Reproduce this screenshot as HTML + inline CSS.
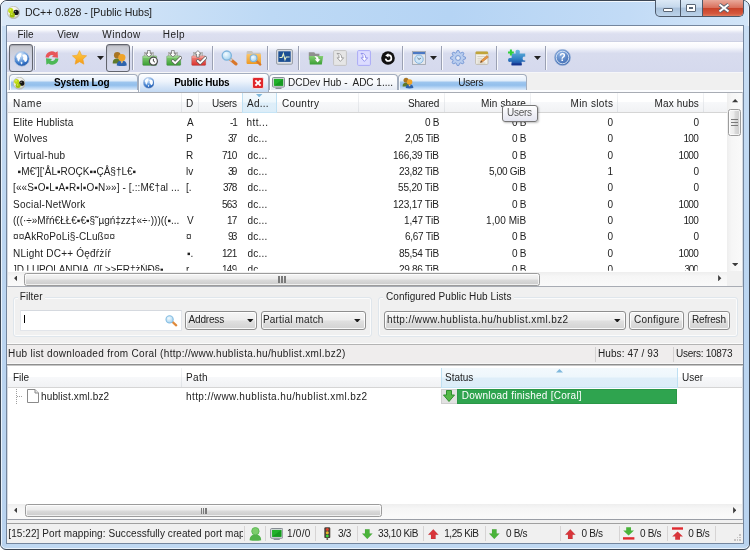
<!DOCTYPE html>
<html lang="en"><head><meta charset="utf-8"><title>DC++ 0.828 - [Public Hubs]</title>
<style>
html,body{margin:0;padding:0;background:#fff;}
body{width:750px;height:550px;overflow:hidden;font-family:"Liberation Sans","DejaVu Sans",sans-serif;font-size:10px;color:#000;}
#root{position:relative;width:750px;height:550px;overflow:hidden;will-change:transform;}
#root div,#root span.t,#root svg{position:absolute;box-sizing:border-box;}
span.t{white-space:pre;color:#222;}

</style></head><body>
<div id="root">
<svg style="left:0;top:0" width="0" height="0"><defs>
<radialGradient id="gGlobe" cx="40%" cy="22%" r="85%"><stop offset="0" stop-color="#e2eefc"/><stop offset=".35" stop-color="#8db8ea"/><stop offset=".7" stop-color="#3876c8"/><stop offset="1" stop-color="#184a9c"/></radialGradient>
<radialGradient id="gLens" cx="40%" cy="35%" r="70%"><stop offset="0" stop-color="#f4fbff"/><stop offset="1" stop-color="#9fd0ee"/></radialGradient>
<linearGradient id="gStar" x1="0" y1="0" x2="0" y2="1"><stop offset="0" stop-color="#ffd24a"/><stop offset="1" stop-color="#f59a16"/></linearGradient>
<linearGradient id="gGreen" x1="0" y1="0" x2="0" y2="1"><stop offset="0" stop-color="#86cf74"/><stop offset="1" stop-color="#3a9f34"/></linearGradient>
<linearGradient id="gRed" x1="0" y1="0" x2="0" y2="1"><stop offset="0" stop-color="#f58a80"/><stop offset="1" stop-color="#d8302c"/></linearGradient>
<linearGradient id="gOrange" x1="0" y1="0" x2="0" y2="1"><stop offset="0" stop-color="#fbc56a"/><stop offset="1" stop-color="#ee9a22"/></linearGradient>
<linearGradient id="gPuzzle" x1="0" y1="0" x2="0" y2="1"><stop offset="0" stop-color="#6cbadf"/><stop offset=".6" stop-color="#2f7fc4"/><stop offset="1" stop-color="#163f9c"/></linearGradient>
<radialGradient id="gHelp" cx="40%" cy="30%" r="80%"><stop offset="0" stop-color="#8fb4e6"/><stop offset="1" stop-color="#2c5aa6"/></radialGradient>
<radialGradient id="gLogo" cx="45%" cy="40%" r="62%"><stop offset="0" stop-color="#ffffff"/><stop offset=".6" stop-color="#f0f0ea"/><stop offset="1" stop-color="#b4b4aa"/></radialGradient>
<linearGradient id="gTabA" x1="0" y1="0" x2="0" y2="1"><stop offset="0" stop-color="#ffffff"/><stop offset=".45" stop-color="#d9e8f8"/><stop offset=".55" stop-color="#a6c9ee"/><stop offset=".8" stop-color="#a9ccf0"/><stop offset="1" stop-color="#d3e5f8"/></linearGradient>
</defs></svg>
<div style="left:0px;top:0px;width:750px;height:550px;background:#bfd8f2;border:1px solid #3c4654;border-radius:7px 7px 6px 6px;box-shadow:inset 0 0 0 1px #eaf3fc;overflow:hidden;"><div style="left:1px;top:1px;width:746px;height:24px;background:linear-gradient(90deg,#dbe9f8 0,#d2e4f7 14%,#bdd9f5 36%,#b5d4f4 60%,#c2dbf6 84%,#d2e5f8 100%);"></div><div style="left:1px;top:0;width:746px;height:1px;background:#f2f8fe;"></div><div style="left:0;top:0;width:1px;height:548px;background:#eaf3fc;"></div><div style="left:1px;top:25px;width:5px;height:520px;background:linear-gradient(180deg,#c9def4,#bcd6f1 40%,#b9d3ef);"></div><div style="left:743px;top:25px;width:5px;height:520px;background:linear-gradient(180deg,#c9def4,#bcd6f1 40%,#b9d3ef);"></div></div>
<div style="left:6px;top:25px;width:738.4px;height:518.5px;border:1px solid #74869e;background:#f0f0f0;"></div>
<div style="left:655px;top:0px;width:89px;height:17px;border:1px solid #4d596a;border-top:none;border-radius:0 0 5px 5px;background:linear-gradient(180deg,#dce9f6 0,#c5d8ec 45%,#a9c1db 50%,#bcd3ea 100%);overflow:hidden;"><div style="left:24px;top:0;width:1px;height:17px;background:#4d596a"></div><div style="left:46px;top:0;width:1px;height:17px;background:#4d596a"></div><div style="left:47px;top:0;width:41px;height:17px;background:linear-gradient(180deg,#e9a99b 0,#d9705c 45%,#c9432a 50%,#d5573d 80%,#e08a6c 100%)"></div><div style="left:7px;top:8px;width:10px;height:4px;border:1px solid #5a6676;background:#fff;border-radius:1px"></div><div style="left:30px;top:4px;width:10px;height:8px;border:1px solid #5a6676;background:#fff;border-radius:1px"></div><div style="left:33px;top:7px;width:4px;height:2px;border:1px solid #5a6676;background:#c5d6e8"></div></div>
<svg style="left:718px;top:3px" width="12" height="10" viewBox="0 0 12 10"><path d="M1.5 1.5 L10.5 8.5 M10.5 1.5 L1.5 8.5" stroke="#55606e" stroke-width="3.6" stroke-linecap="butt"/><path d="M1.5 1.5 L10.5 8.5 M10.5 1.5 L1.5 8.5" stroke="#fff" stroke-width="2"/></svg>
<span class="t" style="top:6.27px;font-size:10.6px;line-height:12.72px;letter-spacing:-0.072px;left:24.90px;">DC++ 0.828 - [Public Hubs]</span>
<div style="left:7px;top:26px;width:736px;height:15.5px;background:linear-gradient(180deg,#ffffff 0,#f8f9fd 25%,#e6e8f4 38%,#dcdff0 50%,#dadded 100%);"></div>
<div style="left:7px;top:41.3px;width:736px;height:0.9px;background:#cdd1e3;"></div>
<span class="t" style="top:28.84px;font-size:10px;line-height:12.0px;left:17.40px;">File</span>
<span class="t" style="top:28.84px;font-size:10px;line-height:12.0px;left:57.30px;">View</span>
<span class="t" style="top:28.84px;font-size:10px;line-height:12.0px;letter-spacing:0.48px;left:102.30px;">Window</span>
<span class="t" style="top:28.84px;font-size:10px;line-height:12.0px;letter-spacing:0.467px;left:162.70px;">Help</span>
<div style="left:7px;top:42.2px;width:736px;height:30px;background:linear-gradient(180deg,#ffffff 0,#f7f8fc 18%,#e6e9f5 28%,#d8dcee 38%,#d5d9ed 100%);"></div>
<div style="left:7px;top:72px;width:736px;height:1px;background:#f6f6f8;"></div>
<div style="left:9px;top:44px;width:24px;height:28px;border:1px solid #62656e;border-radius:3px;background:linear-gradient(180deg,#c6c7cd 0,#cdd0dc 30%,#d3d7e9 60%,#d6daec 100%);box-shadow:inset 0 1px 1px rgba(60,60,70,.25);"></div>
<div style="left:106px;top:44px;width:24px;height:28px;border:1px solid #62656e;border-radius:3px;background:linear-gradient(180deg,#c6c7cd 0,#cdd0dc 30%,#d3d7e9 60%,#d6daec 100%);box-shadow:inset 0 1px 1px rgba(60,60,70,.25);"></div>
<div style="left:34px;top:46px;width:1px;height:24px;background:#9ba1b3;"></div>
<div style="left:35px;top:46px;width:1px;height:24px;background:#f8f9fd;"></div>
<div style="left:132px;top:46px;width:1px;height:24px;background:#9ba1b3;"></div>
<div style="left:133px;top:46px;width:1px;height:24px;background:#f8f9fd;"></div>
<div style="left:212px;top:46px;width:1px;height:24px;background:#9ba1b3;"></div>
<div style="left:213px;top:46px;width:1px;height:24px;background:#f8f9fd;"></div>
<div style="left:267px;top:46px;width:1px;height:24px;background:#9ba1b3;"></div>
<div style="left:268px;top:46px;width:1px;height:24px;background:#f8f9fd;"></div>
<div style="left:298px;top:46px;width:1px;height:24px;background:#9ba1b3;"></div>
<div style="left:299px;top:46px;width:1px;height:24px;background:#f8f9fd;"></div>
<div style="left:402px;top:46px;width:1px;height:24px;background:#9ba1b3;"></div>
<div style="left:403px;top:46px;width:1px;height:24px;background:#f8f9fd;"></div>
<div style="left:441px;top:46px;width:1px;height:24px;background:#9ba1b3;"></div>
<div style="left:442px;top:46px;width:1px;height:24px;background:#f8f9fd;"></div>
<div style="left:496px;top:46px;width:1px;height:24px;background:#9ba1b3;"></div>
<div style="left:497px;top:46px;width:1px;height:24px;background:#f8f9fd;"></div>
<div style="left:545px;top:46px;width:1px;height:24px;background:#9ba1b3;"></div>
<div style="left:546px;top:46px;width:1px;height:24px;background:#f8f9fd;"></div>
<div style="left:7px;top:73px;width:736px;height:19px;background:#f0f0f0;"></div>
<div style="left:7px;top:91.5px;width:736px;height:195.5px;background:#fff;border:1px solid #a8acb4;border-left-color:#d4d9e0;border-right-color:#d4d9e0;"></div>
<div style="left:8px;top:93px;width:719px;height:20px;background:linear-gradient(180deg,#ffffff 0,#ffffff 45%,#f7f8fa 50%,#f1f2f4 100%);border-bottom:1px solid #d5d5d5;"></div>
<div style="left:7px;top:366px;width:736px;height:154px;background:#fff;border:1px solid #9a9ea6;border-top-color:#fff;border-left-color:#d4d9e0;border-right-color:#d4d9e0;"></div>
<div style="left:7px;top:523px;width:736px;height:20px;background:#f0f0f0;border-top:1px solid #a0a0a0;"></div>
<div style="left:181px;top:93px;width:1px;height:19px;background:linear-gradient(180deg,#f2f3f5,#dfe2e6);"></div>
<div style="left:198px;top:93px;width:1px;height:19px;background:linear-gradient(180deg,#f2f3f5,#dfe2e6);"></div>
<div style="left:242px;top:93px;width:1px;height:19px;background:linear-gradient(180deg,#f2f3f5,#dfe2e6);"></div>
<div style="left:276px;top:93px;width:1px;height:19px;background:linear-gradient(180deg,#f2f3f5,#dfe2e6);"></div>
<div style="left:358px;top:93px;width:1px;height:19px;background:linear-gradient(180deg,#f2f3f5,#dfe2e6);"></div>
<div style="left:444px;top:93px;width:1px;height:19px;background:linear-gradient(180deg,#f2f3f5,#dfe2e6);"></div>
<div style="left:530px;top:93px;width:1px;height:19px;background:linear-gradient(180deg,#f2f3f5,#dfe2e6);"></div>
<div style="left:617px;top:93px;width:1px;height:19px;background:linear-gradient(180deg,#f2f3f5,#dfe2e6);"></div>
<div style="left:703px;top:93px;width:1px;height:19px;background:linear-gradient(180deg,#f2f3f5,#dfe2e6);"></div>
<div style="left:242px;top:93px;width:35px;height:20px;background:linear-gradient(180deg,#f3f9fd 0,#eef7fc 45%,#deeef9 55%,#dcedf8 100%);border-left:1px solid #bfe0f3;border-right:1px solid #bfe0f3;border-bottom:1px solid #c6e4f5;"></div>
<svg style="left:256.4px;top:94px" width="6.4" height="3.4" viewBox="0 0 8 4"><path d="M0 0 H8 L4 4 Z" fill="#7fb8dc"/></svg>
<span class="t" style="top:97.83px;font-size:10px;line-height:12.0px;letter-spacing:0.667px;left:13.00px;">Name</span>
<span class="t" style="top:97.83px;font-size:10px;line-height:12.0px;left:186.00px;">D</span>
<span class="t" style="top:97.83px;font-size:10px;line-height:12.0px;letter-spacing:-0.25px;left:212.00px;">Users</span>
<span class="t" style="top:97.83px;font-size:10px;line-height:12.0px;letter-spacing:0.25px;left:247.00px;">Ad...</span>
<span class="t" style="top:97.83px;font-size:10px;line-height:12.0px;letter-spacing:0.333px;left:282.00px;">Country</span>
<span class="t" style="top:97.83px;font-size:10px;line-height:12.0px;letter-spacing:-0.2px;left:408.00px;">Shared</span>
<span class="t" style="top:97.83px;font-size:10px;line-height:12.0px;letter-spacing:0.125px;left:481.00px;">Min share</span>
<span class="t" style="top:97.83px;font-size:10px;line-height:12.0px;letter-spacing:0.375px;left:570.50px;">Min slots</span>
<span class="t" style="top:97.83px;font-size:10px;line-height:12.0px;letter-spacing:0.143px;left:654.50px;">Max hubs</span>
<span class="t" style="top:116.83px;font-size:10px;line-height:12.0px;letter-spacing:0.154px;left:13.00px;">Elite Hublista</span>
<span class="t" style="top:116.83px;font-size:10px;line-height:12.0px;left:187.00px;">A</span>
<span class="t" style="top:116.83px;font-size:10px;line-height:12.0px;letter-spacing:-1.0px;left:230.00px;">-1</span>
<span class="t" style="top:116.83px;font-size:10px;line-height:12.0px;letter-spacing:0.4px;left:246.50px;">htt...</span>
<span class="t" style="top:116.83px;font-size:10px;line-height:12.0px;letter-spacing:-0.3px;left:425.00px;">0 B</span>
<span class="t" style="top:116.83px;font-size:10px;line-height:12.0px;letter-spacing:-0.3px;left:512.00px;">0 B</span>
<span class="t" style="top:116.83px;font-size:10px;line-height:12.0px;left:607.50px;">0</span>
<span class="t" style="top:116.83px;font-size:10px;line-height:12.0px;left:693.50px;">0</span>
<span class="t" style="top:132.84px;font-size:10px;line-height:12.0px;letter-spacing:0.2px;left:14.00px;">Wolves</span>
<span class="t" style="top:132.84px;font-size:10px;line-height:12.0px;left:186.00px;">P</span>
<span class="t" style="top:132.84px;font-size:10px;line-height:12.0px;letter-spacing:-1.8px;left:228.00px;">37</span>
<span class="t" style="top:132.84px;font-size:10px;line-height:12.0px;letter-spacing:0.25px;left:247.50px;">dc...</span>
<span class="t" style="top:132.84px;font-size:10px;line-height:12.0px;letter-spacing:-0.286px;left:405.00px;">2,05 TiB</span>
<span class="t" style="top:132.84px;font-size:10px;line-height:12.0px;letter-spacing:-0.3px;left:512.00px;">0 B</span>
<span class="t" style="top:132.84px;font-size:10px;line-height:12.0px;left:607.50px;">0</span>
<span class="t" style="top:132.84px;font-size:10px;line-height:12.0px;letter-spacing:-0.7px;left:683.50px;">100</span>
<span class="t" style="top:149.84px;font-size:10px;line-height:12.0px;letter-spacing:0.3px;left:14.00px;">Virtual-hub</span>
<span class="t" style="top:149.84px;font-size:10px;line-height:12.0px;left:186.00px;">R</span>
<span class="t" style="top:149.84px;font-size:10px;line-height:12.0px;letter-spacing:-0.7px;left:222.00px;">710</span>
<span class="t" style="top:149.84px;font-size:10px;line-height:12.0px;letter-spacing:0.25px;left:247.50px;">dc...</span>
<span class="t" style="top:149.84px;font-size:10px;line-height:12.0px;letter-spacing:-0.2px;left:393.00px;">166,39 TiB</span>
<span class="t" style="top:149.84px;font-size:10px;line-height:12.0px;letter-spacing:-0.3px;left:512.00px;">0 B</span>
<span class="t" style="top:149.84px;font-size:10px;line-height:12.0px;left:607.50px;">0</span>
<span class="t" style="top:149.84px;font-size:10px;line-height:12.0px;letter-spacing:-0.667px;left:678.50px;">1000</span>
<span class="t" style="top:165.84px;font-size:10px;line-height:12.0px;left:17.60px;">▪M€&#x27;][‘ÅL▪ROÇK▪▪ÇÅ§†L€▪</span>
<span class="t" style="top:165.84px;font-size:10px;line-height:12.0px;left:186.00px;">lv</span>
<span class="t" style="top:165.84px;font-size:10px;line-height:12.0px;letter-spacing:-1.8px;left:228.00px;">39</span>
<span class="t" style="top:165.84px;font-size:10px;line-height:12.0px;letter-spacing:0.25px;left:247.50px;">dc...</span>
<span class="t" style="top:165.84px;font-size:10px;line-height:12.0px;letter-spacing:-0.275px;left:399.00px;">23,82 TiB</span>
<span class="t" style="top:165.84px;font-size:10px;line-height:12.0px;letter-spacing:-0.286px;left:489.00px;">5,00 GiB</span>
<span class="t" style="top:165.84px;font-size:10px;line-height:12.0px;left:607.50px;">1</span>
<span class="t" style="top:165.84px;font-size:10px;line-height:12.0px;left:693.50px;">0</span>
<span class="t" style="top:181.84px;font-size:10px;line-height:12.0px;letter-spacing:0.111px;left:13.00px;">[««S▪O▪L▪A▪R▪I▪O▪N»»] - [.::M€†al ...</span>
<span class="t" style="top:181.84px;font-size:10px;line-height:12.0px;left:186.00px;">[.</span>
<span class="t" style="top:181.84px;font-size:10px;line-height:12.0px;letter-spacing:-1.2px;left:223.00px;">378</span>
<span class="t" style="top:181.84px;font-size:10px;line-height:12.0px;letter-spacing:0.25px;left:247.50px;">dc...</span>
<span class="t" style="top:181.84px;font-size:10px;line-height:12.0px;letter-spacing:-0.15px;left:398.00px;">55,20 TiB</span>
<span class="t" style="top:181.84px;font-size:10px;line-height:12.0px;letter-spacing:-0.3px;left:512.00px;">0 B</span>
<span class="t" style="top:181.84px;font-size:10px;line-height:12.0px;left:607.50px;">0</span>
<span class="t" style="top:181.84px;font-size:10px;line-height:12.0px;left:693.50px;">0</span>
<span class="t" style="top:198.84px;font-size:10px;line-height:12.0px;letter-spacing:0.231px;left:13.00px;">Social-NetWork</span>
<span class="t" style="top:198.84px;font-size:10px;line-height:12.0px;letter-spacing:-0.7px;left:222.00px;">563</span>
<span class="t" style="top:198.84px;font-size:10px;line-height:12.0px;letter-spacing:0.25px;left:247.50px;">dc...</span>
<span class="t" style="top:198.84px;font-size:10px;line-height:12.0px;letter-spacing:-0.2px;left:393.00px;">123,17 TiB</span>
<span class="t" style="top:198.84px;font-size:10px;line-height:12.0px;letter-spacing:-0.3px;left:512.00px;">0 B</span>
<span class="t" style="top:198.84px;font-size:10px;line-height:12.0px;left:607.50px;">0</span>
<span class="t" style="top:198.84px;font-size:10px;line-height:12.0px;letter-spacing:-0.667px;left:678.50px;">1000</span>
<span class="t" style="top:214.84px;font-size:10px;line-height:12.0px;left:13.00px;">(((·÷»Mřń€ŁŁ€▪€▪§˜µgń‡zz‡«÷·)))((▪...</span>
<span class="t" style="top:214.84px;font-size:10px;line-height:12.0px;left:187.00px;">V</span>
<span class="t" style="top:214.84px;font-size:10px;line-height:12.0px;letter-spacing:-0.8px;left:227.00px;">17</span>
<span class="t" style="top:214.84px;font-size:10px;line-height:12.0px;letter-spacing:0.25px;left:247.50px;">dc...</span>
<span class="t" style="top:214.84px;font-size:10px;line-height:12.0px;letter-spacing:-0.143px;left:404.00px;">1,47 TiB</span>
<span class="t" style="top:214.84px;font-size:10px;line-height:12.0px;letter-spacing:0.086px;left:486.00px;">1,00 MiB</span>
<span class="t" style="top:214.84px;font-size:10px;line-height:12.0px;left:607.50px;">0</span>
<span class="t" style="top:214.84px;font-size:10px;line-height:12.0px;letter-spacing:-0.7px;left:683.50px;">100</span>
<span class="t" style="top:230.84px;font-size:10px;line-height:12.0px;letter-spacing:0.118px;left:13.00px;">¤¤AkRoPoLi§-CLuß¤¤</span>
<span class="t" style="top:230.84px;font-size:10px;line-height:12.0px;left:186.00px;">¤</span>
<span class="t" style="top:230.84px;font-size:10px;line-height:12.0px;letter-spacing:-1.8px;left:228.00px;">93</span>
<span class="t" style="top:230.84px;font-size:10px;line-height:12.0px;letter-spacing:0.25px;left:247.50px;">dc...</span>
<span class="t" style="top:230.84px;font-size:10px;line-height:12.0px;letter-spacing:-0.286px;left:405.00px;">6,67 TiB</span>
<span class="t" style="top:230.84px;font-size:10px;line-height:12.0px;letter-spacing:-0.3px;left:512.00px;">0 B</span>
<span class="t" style="top:230.84px;font-size:10px;line-height:12.0px;left:607.50px;">0</span>
<span class="t" style="top:230.84px;font-size:10px;line-height:12.0px;left:693.50px;">0</span>
<span class="t" style="top:247.84px;font-size:10px;line-height:12.0px;letter-spacing:0.222px;left:13.00px;">NLight DC++ Óęđŕżíŕ</span>
<span class="t" style="top:247.84px;font-size:10px;line-height:12.0px;left:187.00px;">▪.</span>
<span class="t" style="top:247.84px;font-size:10px;line-height:12.0px;letter-spacing:-0.7px;left:222.00px;">121</span>
<span class="t" style="top:247.84px;font-size:10px;line-height:12.0px;letter-spacing:0.25px;left:247.50px;">dc...</span>
<span class="t" style="top:247.84px;font-size:10px;line-height:12.0px;letter-spacing:-0.275px;left:399.00px;">85,54 TiB</span>
<span class="t" style="top:247.84px;font-size:10px;line-height:12.0px;letter-spacing:-0.3px;left:512.00px;">0 B</span>
<span class="t" style="top:247.84px;font-size:10px;line-height:12.0px;left:607.50px;">0</span>
<span class="t" style="top:247.84px;font-size:10px;line-height:12.0px;letter-spacing:-0.667px;left:678.50px;">1000</span>
<span class="t" style="top:263.84px;font-size:10px;line-height:12.0px;letter-spacing:-0.107px;left:14.00px;clip-path:inset(0 0 5.2px 0);">]D LUPOLANDIA  (][ &gt;&gt;ER‡żŃĐ§▪</span>
<span class="t" style="top:263.84px;font-size:10px;line-height:12.0px;left:186.00px;clip-path:inset(0 0 5.2px 0);">r</span>
<span class="t" style="top:263.84px;font-size:10px;line-height:12.0px;letter-spacing:-0.7px;left:222.00px;clip-path:inset(0 0 5.2px 0);">149</span>
<span class="t" style="top:263.84px;font-size:10px;line-height:12.0px;letter-spacing:0.25px;left:247.50px;clip-path:inset(0 0 5.2px 0);">dc...</span>
<span class="t" style="top:263.84px;font-size:10px;line-height:12.0px;letter-spacing:-0.275px;left:399.00px;clip-path:inset(0 0 5.2px 0);">29,86 TiB</span>
<span class="t" style="top:263.84px;font-size:10px;line-height:12.0px;letter-spacing:-0.3px;left:512.00px;clip-path:inset(0 0 5.2px 0);">0 B</span>
<span class="t" style="top:263.84px;font-size:10px;line-height:12.0px;left:607.50px;clip-path:inset(0 0 5.2px 0);">0</span>
<span class="t" style="top:263.84px;font-size:10px;line-height:12.0px;letter-spacing:-1.2px;left:684.50px;clip-path:inset(0 0 5.2px 0);">300</span>
<div style="left:727px;top:93px;width:15px;height:179px;background:linear-gradient(90deg,#eeeeee,#f6f6f6 30%,#fafafa);"></div>
<svg style="left:731.5px;top:99.3px" width="6.4" height="3.4" viewBox="0 0 8 4"><path d="M0 4 L4 0 L8 4 Z" fill="#3c3c3c"/></svg>
<svg style="left:731.5px;top:263px" width="6.4" height="3.4" viewBox="0 0 8 4"><path d="M0 0 L4 4 L8 0 Z" fill="#3c3c3c"/></svg>
<div style="left:727.5px;top:109px;width:13px;height:26.5px;border:1px solid #9c9c9c;border-radius:2.5px;background:linear-gradient(90deg,#f5f5f5 0,#ebebeb 45%,#dadada 55%,#cbcbcb 100%);box-shadow:inset 0 0 0 1px rgba(255,255,255,.7);"></div>
<div style="left:731px;top:118.5px;width:6.5px;height:1.5px;background:#7a7a7a;"></div>
<div style="left:731px;top:121.5px;width:6.5px;height:1.5px;background:#7a7a7a;"></div>
<div style="left:731px;top:124.5px;width:6.5px;height:1.5px;background:#7a7a7a;"></div>
<div style="left:8px;top:271.5px;width:734px;height:14.5px;background:linear-gradient(180deg,#eeeeee,#f6f6f6 30%,#fafafa);"></div>
<div style="left:727px;top:271px;width:15px;height:15px;background:#f0f0f0;"></div>
<svg style="left:14px;top:275px" width="3.4" height="6.4" viewBox="0 0 4 8"><path d="M4 0 L0 4 L4 8 Z" fill="#3c3c3c"/></svg>
<svg style="left:718.2px;top:275px" width="3.4" height="6.4" viewBox="0 0 4 8"><path d="M0 0 L4 4 L0 8 Z" fill="#3c3c3c"/></svg>
<div style="left:24px;top:272.5px;width:516px;height:13px;border:1px solid #9c9c9c;border-radius:2.5px;background:linear-gradient(180deg,#f5f5f5 0,#ebebeb 45%,#dadada 55%,#cbcbcb 100%);box-shadow:inset 0 0 0 1px rgba(255,255,255,.7);"></div>
<div style="left:278px;top:276px;width:1.5px;height:6.5px;background:#7a7a7a;"></div>
<div style="left:281px;top:276px;width:1.5px;height:6.5px;background:#7a7a7a;"></div>
<div style="left:284px;top:276px;width:1.5px;height:6.5px;background:#7a7a7a;"></div>
<div style="left:502px;top:105px;width:36px;height:17px;border:1px solid #767676;border-radius:3px;background:linear-gradient(180deg,#ffffff,#e4e5f0);box-shadow:1px 1px 2px rgba(0,0,0,.25);"></div>
<span class="t" style="top:106.83px;font-size:10px;line-height:12.0px;letter-spacing:-0.25px;left:507.00px;color:#575757;">Users</span>
<div style="left:13px;top:297px;width:359px;height:39.5px;border:1px solid #dfe6ec;border-radius:3px;box-shadow:inset 0 0 0 1px rgba(255,255,255,.75);"></div>
<div style="left:18px;top:292px;width:27px;height:12px;background:#f0f0f0;"></div>
<span class="t" style="top:290.84px;font-size:10px;line-height:12.0px;letter-spacing:0.12px;left:19.70px;">Filter</span>
<div style="left:19.5px;top:309.5px;width:162.5px;height:21.5px;background:#fff;border:1px solid #e2e5ea;border-top-color:#d5d9df;border-radius:1px;"></div>
<div style="left:24px;top:315px;width:1px;height:8px;background:#000;"></div>
<svg style="left:165px;top:314.5px" width="13" height="12" viewBox="0 0 13 12"><path d="M6.5 6 L11.2 10.3" stroke="#e08a3a" stroke-width="2.3" stroke-linecap="round"/><circle cx="4.6" cy="4.4" r="3.6" fill="url(#gLens)" stroke="#86bde2" stroke-width="1.1"/></svg>
<div style="left:185.3px;top:310.5px;width:72.2px;height:19.3px;border:1px solid #8e8e8e;border-radius:3px;background:linear-gradient(180deg,#f6f6f6 0,#ededed 48%,#e0e0e0 52%,#d2d2d2 100%);box-shadow:inset 0 0 0 1px rgba(255,255,255,.85);"></div>
<svg style="left:247px;top:318.7px" width="6.6" height="3.6" viewBox="0 0 7 4"><path d="M0 0 H7 L3.5 4 Z" fill="#1a1a1a"/></svg>
<div style="left:260.6px;top:310.5px;width:105px;height:19.3px;border:1px solid #8e8e8e;border-radius:3px;background:linear-gradient(180deg,#f6f6f6 0,#ededed 48%,#e0e0e0 52%,#d2d2d2 100%);box-shadow:inset 0 0 0 1px rgba(255,255,255,.85);"></div>
<svg style="left:354px;top:318.7px" width="6.6" height="3.6" viewBox="0 0 7 4"><path d="M0 0 H7 L3.5 4 Z" fill="#1a1a1a"/></svg>
<span class="t" style="top:313.84px;font-size:10px;line-height:12.0px;letter-spacing:-0.167px;left:188.50px;">Address</span>
<span class="t" style="top:313.84px;font-size:10px;line-height:12.0px;letter-spacing:0.167px;left:263.00px;">Partial match</span>
<div style="left:378px;top:297px;width:360px;height:39.5px;border:1px solid #dfe6ec;border-radius:3px;box-shadow:inset 0 0 0 1px rgba(255,255,255,.75);"></div>
<div style="left:383px;top:292px;width:131px;height:12px;background:#f0f0f0;"></div>
<span class="t" style="top:290.84px;font-size:10px;line-height:12.0px;letter-spacing:0.077px;left:386.00px;">Configured Public Hub Lists</span>
<div style="left:384px;top:310.5px;width:242px;height:19.3px;border:1px solid #8e8e8e;border-radius:3px;background:linear-gradient(180deg,#f6f6f6 0,#ededed 48%,#e0e0e0 52%,#d2d2d2 100%);box-shadow:inset 0 0 0 1px rgba(255,255,255,.85);"></div>
<svg style="left:614px;top:318.7px" width="6.6" height="3.6" viewBox="0 0 7 4"><path d="M0 0 H7 L3.5 4 Z" fill="#1a1a1a"/></svg>
<span class="t" style="top:313.84px;font-size:10px;line-height:12.0px;letter-spacing:0.405px;left:387.00px;">http://www.hublista.hu/hublist.xml.bz2</span>
<div style="left:629.3px;top:310.5px;width:54.5px;height:19.3px;border:1px solid #8e8e8e;border-radius:3px;background:linear-gradient(180deg,#f6f6f6 0,#ededed 48%,#e0e0e0 52%,#d2d2d2 100%);box-shadow:inset 0 0 0 1px rgba(255,255,255,.85);"></div>
<span class="t" style="top:313.84px;font-size:10px;line-height:12.0px;letter-spacing:0.25px;left:634.00px;">Configure</span>
<div style="left:688.3px;top:310.5px;width:42px;height:19.3px;border:1px solid #8e8e8e;border-radius:3px;background:linear-gradient(180deg,#f6f6f6 0,#ededed 48%,#e0e0e0 52%,#d2d2d2 100%);box-shadow:inset 0 0 0 1px rgba(255,255,255,.85);"></div>
<span class="t" style="top:313.84px;font-size:10px;line-height:12.0px;letter-spacing:-0.167px;left:692.00px;">Refresh</span>
<div style="left:7px;top:343px;width:736px;height:1px;background:#fbfbfb;"></div>
<div style="left:7px;top:344px;width:736px;height:1px;background:#b4b4b4;"></div>
<div style="left:7px;top:345px;width:736px;height:18px;background:#efeded;"></div>
<div style="left:7px;top:363px;width:736px;height:1px;background:#f7f7f7;"></div>
<div style="left:7px;top:364px;width:736px;height:1px;background:#8e8e8e;"></div>
<div style="left:7px;top:365px;width:736px;height:1px;background:#c6c6c6;"></div>
<div style="left:595px;top:347px;width:1px;height:15px;background:#d3d1d1;"></div>
<div style="left:673px;top:347px;width:1px;height:15px;background:#d3d1d1;"></div>
<span class="t" style="top:347.84px;font-size:10px;line-height:12.0px;letter-spacing:0.314px;left:8.10px;">Hub list downloaded from Coral (http://www.hublista.hu/hublist.xml.bz2)</span>
<span class="t" style="top:347.84px;font-size:10px;line-height:12.0px;letter-spacing:0.083px;left:598.00px;">Hubs: 47 / 93</span>
<span class="t" style="top:347.84px;font-size:10px;line-height:12.0px;letter-spacing:-0.273px;left:676.00px;">Users: 10873</span>
<div style="left:8px;top:368px;width:734px;height:20px;background:linear-gradient(180deg,#ffffff 0,#ffffff 45%,#f7f8fa 50%,#f1f2f4 100%);border-bottom:1px solid #d5d5d5;"></div>
<div style="left:181px;top:368px;width:1px;height:19px;background:linear-gradient(180deg,#f2f3f5,#dfe2e6);"></div>
<div style="left:441px;top:368px;width:1px;height:19px;background:linear-gradient(180deg,#f2f3f5,#dfe2e6);"></div>
<div style="left:677px;top:368px;width:1px;height:19px;background:linear-gradient(180deg,#f2f3f5,#dfe2e6);"></div>
<div style="left:441px;top:368px;width:237px;height:20px;background:linear-gradient(180deg,#f3f9fd 0,#eef7fc 45%,#deeef9 55%,#dcedf8 100%);border-left:1px solid #bfe0f3;border-right:1px solid #bfe0f3;border-bottom:1px solid #c6e4f5;"></div>
<svg style="left:555.5px;top:369.3px" width="7" height="3.5" viewBox="0 0 8 4"><path d="M0 4 H8 L4 0 Z" fill="#7fb8dc"/></svg>
<span class="t" style="top:371.84px;font-size:10px;line-height:12.0px;left:13.00px;">File</span>
<span class="t" style="top:371.84px;font-size:10px;line-height:12.0px;letter-spacing:0.333px;left:186.00px;">Path</span>
<span class="t" style="top:371.84px;font-size:10px;line-height:12.0px;left:445.00px;">Status</span>
<span class="t" style="top:371.84px;font-size:10px;line-height:12.0px;left:682.00px;">User</span>
<span class="t" style="top:390.84px;font-size:10px;line-height:12.0px;letter-spacing:0.143px;left:41.00px;">hublist.xml.bz2</span>
<span class="t" style="top:390.84px;font-size:10px;line-height:12.0px;letter-spacing:0.405px;left:186.00px;">http://www.hublista.hu/hublist.xml.bz2</span>
<div style="left:441px;top:389px;width:16.5px;height:15px;background:#e2e2e2;border:1px solid #cfcfcf;"></div>
<div style="left:457px;top:389px;width:220px;height:15px;background:#2fa44f;border:1px solid #2b9747;"></div>
<span class="t" style="top:389.84px;font-size:10px;line-height:12.0px;letter-spacing:0.25px;left:461.70px;color:#fff;">Download finished [Coral]</span>
<svg style="left:443px;top:390.3px" width="12" height="12" viewBox="0 0 12 12"><path d="M3.5 0.5 H8.5 V5 H11.5 L6 11.5 L0.5 5 H3.5 Z" fill="#55b848" stroke="#2f8f2f" stroke-width="1"/></svg>
<svg style="left:27px;top:389px" width="12" height="14" viewBox="0 0 12 14"><path d="M0.5 0.5 H8 L11.5 4 V13.5 H0.5 Z" fill="#fff" stroke="#8a8a8a"/><path d="M8 0.5 V4 H11.5" fill="#e8e8e8" stroke="#8a8a8a"/></svg>
<div style="left:16px;top:389px;width:1px;height:16px;background:repeating-linear-gradient(180deg,#a0a0a0 0,#a0a0a0 1px,transparent 1px,transparent 2px);"></div>
<div style="left:17px;top:396px;width:6px;height:1px;background:repeating-linear-gradient(90deg,#a0a0a0 0,#a0a0a0 1px,transparent 1px,transparent 2px);"></div>
<div style="left:8px;top:504px;width:734px;height:15px;background:linear-gradient(180deg,#eeeeee,#f6f6f6 30%,#fafafa);"></div>
<svg style="left:14px;top:507.2px" width="3.4" height="6.4" viewBox="0 0 4 8"><path d="M4 0 L0 4 L4 8 Z" fill="#3c3c3c"/></svg>
<svg style="left:732.7px;top:507.4px" width="3.4" height="6.4" viewBox="0 0 4 8"><path d="M0 0 L4 4 L0 8 Z" fill="#3c3c3c"/></svg>
<div style="left:24.7px;top:504.3px;width:357px;height:12.6px;border:1px solid #9c9c9c;border-radius:2.5px;background:linear-gradient(180deg,#f5f5f5 0,#ebebeb 45%,#dadada 55%,#cbcbcb 100%);box-shadow:inset 0 0 0 1px rgba(255,255,255,.7);"></div>
<div style="left:200.5px;top:507.5px;width:1.3px;height:6.3px;background:#7a7a7a;"></div>
<div style="left:202.9px;top:507.5px;width:1.3px;height:6.3px;background:#7a7a7a;"></div>
<div style="left:205.3px;top:507.5px;width:1.3px;height:6.3px;background:#7a7a7a;"></div>
<span class="t" style="top:527.83px;font-size:10px;line-height:12.0px;letter-spacing:0.08px;left:8.30px;">[15:22] Port mapping: Successfully created port map</span>
<div style="left:242.8px;top:525px;width:3px;height:17px;background:#f0f0f0;"></div>
<svg style="left:7.3px;top:6.1px" width="13" height="13" viewBox="0 0 13 13"><circle cx="6.5" cy="6.5" r="6.2" fill="url(#gLogo)" stroke="#b0b0a6" stroke-width=".6"/><circle cx="9.1" cy="6.4" r="2.7" fill="#151515"/><circle cx="8.4" cy="5.5" r=".8" fill="#8a8a8a"/><circle cx="5.3" cy="8.9" r="2.6" fill="#9fc008"/><circle cx="3.8" cy="4.6" r="2.6" fill="#bedb10"/><circle cx="3.2" cy="3.9" r=".9" fill="#e2f06a"/><circle cx="4.7" cy="8.2" r=".9" fill="#cfe44a"/></svg>
<svg style="left:14.2px;top:51px" width="15.6" height="15.6" viewBox="0 0 15 15"><circle cx="7.5" cy="7.5" r="7.2" fill="url(#gGlobe)" stroke="#b4c6e2" stroke-width=".7"/><path d="M2.4 4.6 Q3.6 2.4 6.2 2 Q8 2.6 6.8 4 Q7.2 5.4 5.8 6.2 Q6.2 7.6 5 8.6 Q5.4 10 4.4 10.2 Q3 8.6 3.2 7 Q1.8 6.2 2.4 4.6z" fill="#fbfdff"/><path d="M8.2 3.6 Q10.4 2.4 12.2 4.2 Q13.4 6 12.8 8.4 Q12 10.8 10.4 10.6 Q10.2 8.8 8.8 8.2 Q8.4 7 9 6 Q7.6 5 8.2 3.6z" fill="#fbfdff"/><path d="M6.4 10.4 Q7.8 10 8.2 11.4 Q8 12.8 7 13 Q6.2 12 6.4 10.4z" fill="#e8f1fb"/></svg>
<svg style="left:45px;top:51px" width="14" height="14" viewBox="0 0 14 14"><path d="M0.6 6.6 A6.2 6.2 0 0 1 10.6 1.6 L12.6 0.2 L13 6.8 L6.8 6 L8.6 4.4 A3.2 3.2 0 0 0 3.8 6.6 Z" fill="#e8555a"/><path d="M13.4 7.4 A6.2 6.2 0 0 1 3.4 12.4 L1.4 13.8 L1 7.2 L7.2 8 L5.4 9.6 A3.2 3.2 0 0 0 10.2 7.4 Z" fill="#4cb856"/></svg>
<svg style="left:72.4px;top:50.4px" width="15" height="15" viewBox="0 0 15 15"><path d="M7.5 0.6 L9.6 5.2 L14.6 5.8 L10.9 9.2 L11.9 14.2 L7.5 11.7 L3.1 14.2 L4.1 9.2 L0.4 5.8 L5.4 5.2 Z" fill="url(#gStar)" stroke="#f0a024" stroke-width=".6"/></svg>
<svg style="left:96.5px;top:56px" width="7" height="4" viewBox="0 0 7 4"><path d="M0 0 H7 L3.5 4 Z" fill="#222"/></svg>
<svg style="left:112px;top:51px" width="15.5" height="15" viewBox="0 0 15 15"><path d="M0.5 11.5 q0 -4 4.5 -4 q4 0 4.5 4 v1 h-9z" fill="#5f7a2a"/><circle cx="5" cy="4.3" r="3.3" fill="#a87422"/><path d="M4.5 14.5 q0 -5 5 -5 q5 0 5 5 q-5 1 -10 0z" fill="#2d63ad"/><circle cx="9.6" cy="6.6" r="3.6" fill="#f0a428"/><path d="M8.2 10.3 l1.4 2.2 l1.4 -2.2z" fill="#f4c77c"/></svg>
<svg style="left:141.5px;top:50px" width="16" height="16" viewBox="0 0 16 16"><rect x="2.4" y="2.6" width="9" height="5" fill="#d4d4d4" stroke="#a9a9a9" stroke-width=".7"/><rect x="0.6" y="5.8" width="14.2" height="9.6" rx="1" fill="url(#gGreen)" stroke="rgba(0,0,0,.18)" stroke-width=".6"/><rect x="1.2" y="6.4" width="13" height="1.2" fill="rgba(255,255,255,.35)"/><path d="M5.6 0.4 h2.6 v3.2 h2 l-3.3 3.4 l-3.3 -3.4 h2z" fill="#fff" stroke="#5e5e5e" stroke-width=".7"/><circle cx="11.4" cy="11.2" r="4" fill="#fff" stroke="#4a4a4a" stroke-width="1.2"/><path d="M11.4 8.8 V11.2 L13 12.2" fill="none" stroke="#333" stroke-width=".9"/></svg>
<svg style="left:166px;top:50px" width="16" height="16" viewBox="0 0 16 16"><rect x="2.4" y="2.6" width="9" height="5" fill="#d4d4d4" stroke="#a9a9a9" stroke-width=".7"/><rect x="0.6" y="5.8" width="14.2" height="9.6" rx="1" fill="url(#gGreen)" stroke="rgba(0,0,0,.18)" stroke-width=".6"/><rect x="1.2" y="6.4" width="13" height="1.2" fill="rgba(255,255,255,.35)"/><path d="M5.6 0.4 h2.6 v3.2 h2 l-3.3 3.4 l-3.3 -3.4 h2z" fill="#fff" stroke="#5e5e5e" stroke-width=".7"/><path d="M6.8 10.8 L9.2 13.2 L14.4 7.8" fill="none" stroke="#5e5e5e" stroke-width="3.2" stroke-linecap="round" stroke-linejoin="round"/><path d="M6.8 10.8 L9.2 13.2 L14.4 7.8" fill="none" stroke="#fff" stroke-width="1.9" stroke-linecap="round" stroke-linejoin="round"/></svg>
<svg style="left:190.5px;top:50px" width="16" height="16" viewBox="0 0 16 16"><rect x="2.4" y="2.6" width="9" height="5" fill="#d4d4d4" stroke="#a9a9a9" stroke-width=".7"/><rect x="0.6" y="5.8" width="14.2" height="9.6" rx="1" fill="url(#gRed)" stroke="rgba(0,0,0,.18)" stroke-width=".6"/><rect x="1.2" y="6.4" width="13" height="1.2" fill="rgba(255,255,255,.35)"/><path d="M5.6 7.2 h2.6 v-3.2 h2 l-3.3 -3.4 l-3.3 3.4 h2z" fill="#fff" stroke="#5e5e5e" stroke-width=".7"/><path d="M6.8 10.8 L9.2 13.2 L14.4 7.8" fill="none" stroke="#5e5e5e" stroke-width="3.2" stroke-linecap="round" stroke-linejoin="round"/><path d="M6.8 10.8 L9.2 13.2 L14.4 7.8" fill="none" stroke="#fff" stroke-width="1.9" stroke-linecap="round" stroke-linejoin="round"/></svg>
<svg style="left:220.5px;top:50px" width="17" height="16" viewBox="0 0 17 16"><path d="M8.5 8.5 L15 14" stroke="#d9772a" stroke-width="3" stroke-linecap="round"/><path d="M8.5 8.5 L11 10.6" stroke="#c9c9c9" stroke-width="2.6"/><circle cx="5.8" cy="5.6" r="4.6" fill="url(#gLens)" stroke="#7eb4dc" stroke-width="1.3"/></svg>
<svg style="left:245.5px;top:50px" width="16" height="16" viewBox="0 0 16 16"><path d="M0.6 2.5 q0 -1.4 1.4 -1.4 h4 l1.2 1.6 h6.6 q1 0 1 1 v9 q0 1 -1 1 h-12.2 q-1 0 -1 -1z" fill="#c9c4bb" /><rect x="0.6" y="4" width="14.4" height="10" rx="1" fill="url(#gOrange)"/><path d="M9.5 10 L14.3 14.6" stroke="#d9772a" stroke-width="2.2" stroke-linecap="round"/><circle cx="7.6" cy="8.2" r="3.4" fill="url(#gLens)" stroke="#7eb4dc" stroke-width="1.1"/></svg>
<svg style="left:276px;top:49px" width="17" height="16" viewBox="0 0 17 16"><rect x="0.6" y="0.6" width="15.8" height="14.6" rx="1.2" fill="#dfe2e6" stroke="#8d939c" stroke-width=".9"/><rect x="2.3" y="2.3" width="12.4" height="10.6" fill="#1c4f93"/><path d="M3.5 8.5 H6 L7.4 4.6 L9 10.8 L10.2 8 H13.6" fill="none" stroke="#e6f0c8" stroke-width="1.1"/></svg>
<svg style="left:308px;top:51px" width="16" height="14" viewBox="0 0 16 14"><path d="M0.8 1.2 h5.4 l1.2 1.6 h4 v6 h-10.6z" fill="#8f8f8f"/><path d="M1.2 5 h14 l-1.4 8.4 h-12z" fill="url(#gGreen)"/><path d="M6.2 5.2 q4 -0.6 4.6 3 h1.8 l-3 3.4 l-3 -3.4 h1.8 q-0.2 -1.6 -2.2 -3z" fill="#fff" stroke="rgba(0,0,0,.15)" stroke-width=".4"/></svg>
<svg style="left:333px;top:50px" width="14" height="16" viewBox="0 0 14 16"><rect x="0.6" y="0.6" width="12.8" height="14.8" rx="1" fill="#e6e6e6" stroke="#c4c4c4" stroke-width="1"/><path d="M4 3.4 q4.6 -0.4 4.6 4.4 h2 l-3.2 3.6 l-3.2 -3.6 h2 q0.2 -2.8 -2.2 -4.4z" fill="#ffffff" stroke="#8c8c8c" stroke-width=".8"/></svg>
<svg style="left:357px;top:50px" width="14" height="16" viewBox="0 0 14 16"><rect x="0.6" y="0.6" width="12.8" height="14.8" rx="1" fill="#dcdcff" stroke="#aaaaf6" stroke-width="1"/><path d="M4 3.4 q4.6 -0.4 4.6 4.4 h2 l-3.2 3.6 l-3.2 -3.6 h2 q0.2 -2.8 -2.2 -4.4z" fill="#ffffff" stroke="#7c7ce8" stroke-width=".8"/></svg>
<svg style="left:381px;top:51px" width="14" height="14" viewBox="0 0 14 14"><circle cx="7" cy="7" r="6.8" fill="#111"/><path d="M4.6 7.6 A2.9 2.9 0 1 0 7 4.2" fill="none" stroke="#fff" stroke-width="1.7"/><path d="M7.4 2.2 L4.2 4.4 L7.6 6.4z" fill="#fff"/></svg>
<svg style="left:412px;top:51px" width="14" height="14" viewBox="0 0 14 14"><rect x="0.5" y="0.5" width="13" height="13" fill="#e4e6ea" stroke="#a3a8b2" stroke-width=".9"/><rect x="1" y="1" width="12" height="2.2" fill="#4a78c4"/><circle cx="7" cy="8.2" r="4.2" fill="#cfe6f8" stroke="#86b7e0" stroke-width="1"/><path d="M5.4 6.8 L7 8.4 L8.8 7.2" fill="none" stroke="#456" stroke-width=".8"/></svg>
<svg style="left:429.5px;top:56px" width="7" height="4" viewBox="0 0 7 4"><path d="M0 0 H7 L3.5 4 Z" fill="#222"/></svg>
<svg style="left:450px;top:50px" width="16" height="16" viewBox="0 0 16 16"><polygon points="15.56,7.26 15.56,8.74 13.36,9.63 12.94,10.64 13.87,12.82 12.82,13.87 10.64,12.94 9.63,13.36 8.74,15.56 7.26,15.56 6.37,13.36 5.36,12.94 3.18,13.87 2.13,12.82 3.06,10.64 2.64,9.63 0.44,8.74 0.44,7.26 2.64,6.37 3.06,5.36 2.13,3.18 3.18,2.13 5.36,3.06 6.37,2.64 7.26,0.44 8.74,0.44 9.63,2.64 10.64,3.06 12.82,2.13 13.87,3.18 12.94,5.36 13.36,6.37" fill="#b9cdee" stroke="#6d92d2" stroke-width=".9" stroke-linejoin="round"/><circle cx="8" cy="8" r="2.4" fill="#e6ecf7" stroke="#6d92d2" stroke-width=".9"/></svg>
<svg style="left:475px;top:51px" width="14" height="14" viewBox="0 0 14 14"><rect x="0.6" y="1.2" width="12.4" height="12.2" rx="1" fill="#f3f1ea" stroke="#bdb9ad" stroke-width=".9"/><rect x="0.6" y="0.6" width="12.4" height="2.6" rx="1" fill="#bfa43a"/><path d="M2.4 5.6 h8 M2.4 7.8 h5 M2.4 10 h3 M2.4 12 h8" stroke="#c9c5b8" stroke-width=".8"/><path d="M6 9.6 L12 4.6 L13.4 6.2 L7.4 11 L5.4 11.6z" fill="#e89a44" stroke="#b86a2c" stroke-width=".5"/><path d="M5.4 11.6 L6 9.6 L7.4 11z" fill="#5a4a3a"/></svg>
<svg style="left:508px;top:49px" width="18" height="17" viewBox="0 0 18 17"><path d="M3.6 4.4 h4.2 q-1.2 -3.6 1.9 -3.6 q3.1 0 1.9 3.6 h5.6 v3.4 q-2.6 -0.8 -2.6 1.7 q0 2.5 2.6 1.7 v1.6 h-3.6 v3.4 h-10 v-3.4 h-1 q-2.6 0.6 -2.6 -1.9 q0 -2.5 2.6 -1.9 h1z" fill="url(#gPuzzle)"/><rect x="3.6" y="14.4" width="10" height="1.9" fill="#15348f"/><path d="M1.9 0.6 h2 v1.9 h1.9 v2 h-1.9 v1.9 h-2 v-1.9 h-1.9 v-2 h1.9z" fill="#2fd03a"/></svg>
<svg style="left:533.5px;top:56px" width="7" height="4" viewBox="0 0 7 4"><path d="M0 0 H7 L3.5 4 Z" fill="#222"/></svg>
<svg style="left:554px;top:49px" width="17" height="17" viewBox="0 0 17 17"><circle cx="8.5" cy="8.5" r="8" fill="url(#gHelp)" stroke="#9bb3d8" stroke-width=".8"/><circle cx="8.5" cy="8.5" r="6.3" fill="none" stroke="#dfe9f7" stroke-width=".9"/><text x="8.5" y="12.3" font-family="Liberation Sans,sans-serif" font-size="10.5" font-weight="bold" fill="#fff" text-anchor="middle">?</text></svg>
<div style="left:7px;top:90px;width:736px;height:2px;background:#fbfcfe;"></div>
<div style="left:9px;top:74px;width:129px;height:16px;background:linear-gradient(180deg,#f7fafe 0,#e6f0fb 36%,#9dc5ee 50%,#93bfec 68%,#bcd8f5 86%,#dbe9f9 100%);border:1px solid #a3adbd;border-bottom:none;border-radius:4px 4px 0 0;box-shadow:inset 1px 1px 0 rgba(255,255,255,.8);"></div>
<div style="left:269px;top:74px;width:129px;height:16px;background:linear-gradient(180deg,#ffffff 0,#f7f9fc 50%,#e6ebf4 100%);border:1px solid #a3adbd;border-bottom:none;border-radius:4px 4px 0 0;box-shadow:inset 1px 1px 0 rgba(255,255,255,.8);"></div>
<div style="left:398px;top:74px;width:129px;height:16px;background:linear-gradient(180deg,#f7fafe 0,#e6f0fb 36%,#9dc5ee 50%,#93bfec 68%,#bcd8f5 86%,#dbe9f9 100%);border:1px solid #a3adbd;border-bottom:none;border-radius:4px 4px 0 0;box-shadow:inset 1px 1px 0 rgba(255,255,255,.8);"></div>
<div style="left:138px;top:73px;width:131px;height:19px;background:linear-gradient(180deg,#fdfeff 0,#eef4fc 40%,#d3e3f6 75%,#c3d9f3 100%);border:1px solid #a3adbd;border-bottom:none;border-radius:4px 4px 0 0;box-shadow:inset 1px 1px 0 rgba(255,255,255,.8);"></div>
<svg style="left:12.5px;top:77px" width="12.5" height="12.5" viewBox="0 0 13 13"><circle cx="6.5" cy="6.5" r="6.2" fill="url(#gLogo)" stroke="#b0b0a6" stroke-width=".6"/><circle cx="9.1" cy="6.4" r="2.7" fill="#151515"/><circle cx="8.4" cy="5.5" r=".8" fill="#8a8a8a"/><circle cx="5.3" cy="8.9" r="2.6" fill="#9fc008"/><circle cx="3.8" cy="4.6" r="2.6" fill="#bedb10"/><circle cx="3.2" cy="3.9" r=".9" fill="#e2f06a"/><circle cx="4.7" cy="8.2" r=".9" fill="#cfe44a"/></svg>
<svg style="left:142.5px;top:77.2px" width="11.5" height="11.5" viewBox="0 0 15 15"><circle cx="7.5" cy="7.5" r="7.2" fill="url(#gGlobe)" stroke="#b4c6e2" stroke-width=".7"/><path d="M2.4 4.6 Q3.6 2.4 6.2 2 Q8 2.6 6.8 4 Q7.2 5.4 5.8 6.2 Q6.2 7.6 5 8.6 Q5.4 10 4.4 10.2 Q3 8.6 3.2 7 Q1.8 6.2 2.4 4.6z" fill="#fbfdff"/><path d="M8.2 3.6 Q10.4 2.4 12.2 4.2 Q13.4 6 12.8 8.4 Q12 10.8 10.4 10.6 Q10.2 8.8 8.8 8.2 Q8.4 7 9 6 Q7.6 5 8.2 3.6z" fill="#fbfdff"/><path d="M6.4 10.4 Q7.8 10 8.2 11.4 Q8 12.8 7 13 Q6.2 12 6.4 10.4z" fill="#e8f1fb"/></svg>
<svg style="left:252.2px;top:77px" width="12" height="12" viewBox="0 0 12 12"><rect x="0.5" y="0.5" width="11" height="11" rx="1.5" fill="#e0262a" stroke="#f3d9d9" stroke-width="1"/><path d="M3.4 3.4 L8.6 8.6 M8.6 3.4 L3.4 8.6" stroke="#fff" stroke-width="2"/></svg>
<svg style="left:272px;top:77px" width="13" height="12" viewBox="0 0 13 12"><rect x="0.5" y="0.5" width="12" height="9.6" rx="1" fill="#d9dcdf" stroke="#7e848c" stroke-width=".9"/><rect x="1.9" y="1.9" width="9.2" height="6.8" fill="#21b12a"/><path d="M1.9 8.7 L11.1 1.9 V8.7z" fill="#169a20"/><path d="M3.5 11.3 h6" stroke="#8a9097" stroke-width="1.4"/></svg>
<svg style="left:402px;top:77px" width="12" height="11.5" viewBox="0 0 15 15"><path d="M0.5 11.5 q0 -4 4.5 -4 q4 0 4.5 4 v1 h-9z" fill="#5f7a2a"/><circle cx="5" cy="4.3" r="3.3" fill="#a87422"/><path d="M4.5 14.5 q0 -5 5 -5 q5 0 5 5 q-5 1 -10 0z" fill="#2d63ad"/><circle cx="9.6" cy="6.6" r="3.6" fill="#f0a428"/><path d="M8.2 10.3 l1.4 2.2 l1.4 -2.2z" fill="#f4c77c"/></svg>
<span class="t" style="top:76.83px;font-size:10px;line-height:12.0px;letter-spacing:-0.111px;left:54.00px;font-weight:bold;color:#000;">System Log</span>
<span class="t" style="top:76.83px;font-size:10px;line-height:12.0px;letter-spacing:-0.24px;left:174.20px;font-weight:bold;color:#000;">Public Hubs</span>
<span class="t" style="top:76.83px;font-size:10px;line-height:12.0px;left:288.00px;">DCDev Hub -  ADC 1....</span>
<span class="t" style="top:76.83px;font-size:10px;line-height:12.0px;letter-spacing:-0.25px;left:458.30px;">Users</span>
<div style="left:244px;top:526px;width:1px;height:15px;background:#d6d4d4;"></div>
<div style="left:265px;top:526px;width:1px;height:15px;background:#d6d4d4;"></div>
<div style="left:315px;top:526px;width:1px;height:15px;background:#d6d4d4;"></div>
<div style="left:357px;top:526px;width:1px;height:15px;background:#d6d4d4;"></div>
<div style="left:422.5px;top:526px;width:1px;height:15px;background:#d6d4d4;"></div>
<div style="left:484.7px;top:526px;width:1px;height:15px;background:#d6d4d4;"></div>
<div style="left:559.5px;top:526px;width:1px;height:15px;background:#d6d4d4;"></div>
<div style="left:618.8px;top:526px;width:1px;height:15px;background:#d6d4d4;"></div>
<div style="left:666.5px;top:526px;width:1px;height:15px;background:#d6d4d4;"></div>
<div style="left:714.5px;top:526px;width:1px;height:15px;background:#d6d4d4;"></div>
<svg style="left:249.3px;top:526.7px" width="12.8" height="14" viewBox="0 0 12.8 14"><path d="M0.6 13.2 q0 -5.6 5.8 -5.6 q5.8 0 5.8 5.6 q-5.8 1 -11.6 0z" fill="#52b24a"/><circle cx="6.4" cy="4.2" r="3.7" fill="#7ccc6c" stroke="#52b24a" stroke-width=".8"/></svg>
<svg style="left:270px;top:528px" width="13.4" height="12.2" viewBox="0 0 13 12"><rect x="0.5" y="0.5" width="12" height="9.6" rx="1" fill="#d9dcdf" stroke="#7e848c" stroke-width=".9"/><rect x="1.9" y="1.9" width="9.2" height="6.8" fill="#21b12a"/><path d="M1.9 8.7 L11.1 1.9 V8.7z" fill="#169a20"/><path d="M3.5 11.3 h6" stroke="#8a9097" stroke-width="1.4"/></svg>
<span class="t" style="top:527.83px;font-size:10px;line-height:12.0px;letter-spacing:0.25px;left:287.00px;">1/0/0</span>
<svg style="left:323px;top:526.7px" width="8.6" height="13.6" viewBox="0 0 8.6 13.6"><rect x="1.3" y="0.3" width="6" height="10.8" rx="1.2" fill="#4a4038"/><circle cx="4.3" cy="2.5" r="1.5" fill="#e0402a"/><circle cx="4.3" cy="5.7" r="1.5" fill="#e8b82a"/><circle cx="4.3" cy="8.9" r="1.5" fill="#3cd43a"/><rect x="3.5" y="11" width="1.6" height="2.4" fill="#6a6058"/></svg>
<span class="t" style="top:527.83px;font-size:10px;line-height:12.0px;letter-spacing:-0.2px;left:337.90px;">3/3</span>
<svg style="left:362px;top:528.6px" width="10.8" height="10.3" viewBox="0 0 10.8 10.3"><path d="M3 0.3 H7.6 V4.6 H10.5 L5.3 10 L0.1 4.6 H3 Z" fill="#4ab43a" stroke="rgba(0,0,0,.12)" stroke-width=".5"/></svg>
<span class="t" style="top:527.83px;font-size:10px;line-height:12.0px;letter-spacing:-0.375px;left:378.00px;">33,10 KiB</span>
<svg style="left:428px;top:529.2px" width="10.8" height="10.3" viewBox="0 0 10.8 10.3"><path d="M3 0.3 H7.6 V4.6 H10.5 L5.3 10 L0.1 4.6 H3 Z" transform="translate(0,10.3) scale(1,-1)" fill="#d8353a" stroke="rgba(0,0,0,.12)" stroke-width=".5"/></svg>
<span class="t" style="top:527.83px;font-size:10px;line-height:12.0px;letter-spacing:-0.429px;left:444.20px;">1,25 KiB</span>
<svg style="left:489.4px;top:528.6px" width="10.8" height="10.3" viewBox="0 0 10.8 10.3"><path d="M3 0.3 H7.6 V4.6 H10.5 L5.3 10 L0.1 4.6 H3 Z" fill="#4ab43a" stroke="rgba(0,0,0,.12)" stroke-width=".5"/></svg>
<span class="t" style="top:527.83px;font-size:10px;line-height:12.0px;letter-spacing:-0.35px;left:506.00px;">0 B/s</span>
<svg style="left:564.8px;top:529.2px" width="10.8" height="10.3" viewBox="0 0 10.8 10.3"><path d="M3 0.3 H7.6 V4.6 H10.5 L5.3 10 L0.1 4.6 H3 Z" transform="translate(0,10.3) scale(1,-1)" fill="#d8353a" stroke="rgba(0,0,0,.12)" stroke-width=".5"/></svg>
<span class="t" style="top:527.83px;font-size:10px;line-height:12.0px;letter-spacing:-0.35px;left:581.50px;">0 B/s</span>
<svg style="left:623.3px;top:526.7px" width="11.4" height="13" viewBox="0 0 11.4 13"><rect x="0" y="10.2" width="11.4" height="2.4" fill="#e02a30"/><path d="M3.2 0.2 H8 V3.4 H11 L5.6 8.4 L0.2 3.4 H3.2 Z" fill="#4ab43a"/></svg>
<span class="t" style="top:527.83px;font-size:10px;line-height:12.0px;letter-spacing:-0.35px;left:640.00px;">0 B/s</span>
<svg style="left:672px;top:527px" width="11.4" height="13" viewBox="0 0 11.4 13"><rect x="0" y="0.3" width="11.4" height="2.4" fill="#e02a30"/><path d="M3.2 0.2 H8 V3.4 H11 L5.6 8.4 L0.2 3.4 H3.2 Z" transform="translate(0,13) scale(1,-1)" fill="#d8353a"/></svg>
<span class="t" style="top:527.83px;font-size:10px;line-height:12.0px;letter-spacing:-0.35px;left:688.30px;">0 B/s</span>
<div style="left:739px;top:539px;width:1.6px;height:1.6px;background:#c4c2c2;"></div>
<div style="left:739px;top:536.5px;width:1.6px;height:1.6px;background:#c4c2c2;"></div>
<div style="left:736.5px;top:539px;width:1.6px;height:1.6px;background:#c4c2c2;"></div>
<div style="left:739px;top:534px;width:1.6px;height:1.6px;background:#c4c2c2;"></div>
<div style="left:736.5px;top:536.5px;width:1.6px;height:1.6px;background:#c4c2c2;"></div>
<div style="left:734px;top:539px;width:1.6px;height:1.6px;background:#c4c2c2;"></div>
</div>
</body></html>
